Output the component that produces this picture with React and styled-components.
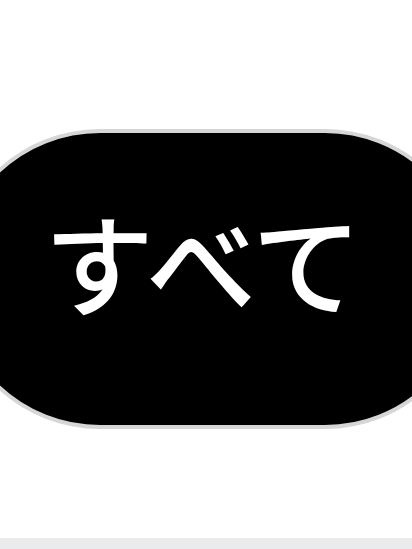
import React from 'react';
import styled, { createGlobalStyle } from 'styled-components';

const GlobalStyle = createGlobalStyle`
  html, body {
    margin: 0;
    padding: 0;
    background: #ffffff;
  }
  * {
    box-sizing: border-box;
  }
`;

function App() {
  return (
    <>
      <GlobalStyle />
      <StPage>
        <StStage>
          <StChip type="button">すべて</StChip>
        </StStage>
        <StBottomBar />
      </StPage>
    </>
  );
}

const StPage = styled.div`
  display: flex;
  flex-direction: column;
  width: 412px;
  height: 549px;
  overflow: hidden;
  background: #ffffff;
`;

const StStage = styled.div`
  flex: 1;
  display: flex;
  align-items: flex-start;
  padding-top: 129px;
  overflow: hidden;
`;

const StChip = styled.button`
  flex: none;
  display: flex;
  align-items: center;
  justify-content: center;
  width: 525px;
  height: 300px;
  margin-left: -50px;
  padding: 0 19px 38px 0;
  border: 4px solid #d6d6d6;
  border-radius: 150px;
  background: #000000;
  color: #ffffff;
  font-family: 'Noto Sans CJK JP', 'Noto Sans', sans-serif;
  font-size: 110px;
  font-weight: 500;
  line-height: 1;
  cursor: pointer;
`;

const StBottomBar = styled.div`
  height: 11px;
  background: #eaebed;
`;

export default App;
